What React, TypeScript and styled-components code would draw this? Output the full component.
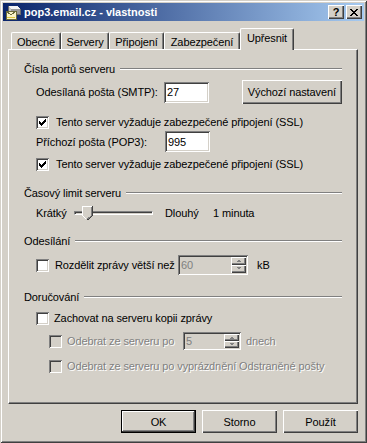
import React from "react";
import styled, { createGlobalStyle, css } from "styled-components";

const FACE = "#D4D0C8";
const SHADOW = "#808080";
const DARK = "#404040";
const HI = "#FFFFFF";

const Global = createGlobalStyle`
  html, body { margin: 0; padding: 0; background: ${FACE}; }
  body { font-family: "Liberation Sans", Arial, sans-serif; font-size: 11px; color: #000; letter-spacing: -0.1px; }
  * { box-sizing: border-box; }
`;

const Window = styled.div`
  width: 367px;
  height: 443px;
  padding: 3px;
  background: ${FACE};
  display: flex;
  flex-direction: column;
  box-shadow: inset 1px 1px ${FACE}, inset -1px -1px ${DARK}, inset 2px 2px ${HI},
    inset -2px -2px ${SHADOW};
`;

const TitleBar = styled.div`
  height: 18px;
  display: flex;
  align-items: center;
  padding: 0 2px 0 2px;
  background: linear-gradient(to right, #0a246a, #a6caf0);
  color: #fff;
`;

const TitleText = styled.div`
  flex: 1;
  margin-left: 3px;
  font-weight: bold;
  font-size: 11px;
  letter-spacing: 0;
  white-space: nowrap;
`;

const CaptionButtons = styled.div`
  display: flex;
  gap: 2px;
`;

const CaptionButton = styled.div`
  width: 16px;
  height: 14px;
  background: ${FACE};
  display: flex;
  align-items: center;
  justify-content: center;
  color: #000;
  font-weight: bold;
  font-size: 11px;
  line-height: 14px;
  box-shadow: inset 1px 1px ${HI}, inset -1px -1px ${DARK}, inset -2px -2px ${SHADOW};
`;

const Body = styled.div`
  flex: 1;
  display: flex;
  flex-direction: column;
  padding: 0 6px 7px 5px;
`;

const TabStrip = styled.div`
  margin-top: 7px;
  height: 21px;
  display: flex;
  align-items: flex-end;
  padding-left: 3px;
`;

const Tab = styled.div<{ $w: number; $active?: boolean }>`
  width: ${(p) => p.$w}px;
  height: 17px;
  display: flex;
  align-items: center;
  justify-content: center;
  background: ${FACE};
  border-top: 1px solid ${HI};
  border-left: 1px solid ${HI};
  border-right: 1px solid ${DARK};
  border-radius: 2px 2px 0 0;
  box-shadow: inset -1px 0 ${SHADOW};
  padding-top: 1px;
  white-space: nowrap;
  ${(p) =>
    p.$active &&
    css`
      height: 22px;
      margin-bottom: -1px;
      padding-bottom: 4px;
      position: relative;
      z-index: 1;
    `}
`;

const Panel = styled.div`
  height: 355px;
  display: flex;
  flex-direction: column;
  padding: 12px 15px 0 15px;
  border-top: 1px solid ${HI};
  border-left: 1px solid ${HI};
  border-right: 1px solid ${DARK};
  border-bottom: 1px solid ${DARK};
  box-shadow: inset -1px -1px ${SHADOW};
`;

const SectionHeader = styled.div<{ $mt: number }>`
  display: flex;
  align-items: center;
  height: 14px;
  margin-top: ${(p) => p.$mt}px;
  white-space: nowrap;
`;

const Rule = styled.div`
  flex: 1;
  margin-left: 5px;
  height: 2px;
  border-top: 1px solid ${SHADOW};
  border-bottom: 1px solid ${HI};
`;

const Row = styled.div<{ $mt: number; $h: number; $indent: number }>`
  display: flex;
  align-items: center;
  height: ${(p) => p.$h}px;
  margin-top: ${(p) => p.$mt}px;
  padding-left: ${(p) => p.$indent}px;
  white-space: nowrap;
`;

const Text = styled.span<{ $w?: number; $ml?: number; $disabled?: boolean }>`
  display: inline-block;
  ${(p) => (p.$w ? `width: ${p.$w}px;` : "")}
  margin-left: ${(p) => p.$ml ?? 0}px;
  ${(p) =>
    p.$disabled &&
    css`
      color: ${SHADOW};
      text-shadow: 1px 1px ${HI};
    `}
`;

const TextBox = styled.div<{ $w: number; $h: number; $disabled?: boolean }>`
  position: relative;
  width: ${(p) => p.$w}px;
  height: ${(p) => p.$h}px;
  padding: 0 3px;
  display: flex;
  align-items: center;
  background: ${(p) => (p.$disabled ? FACE : "#fff")};
  color: ${(p) => (p.$disabled ? SHADOW : "#000")};
  box-shadow: inset 1px 1px ${SHADOW}, inset -1px -1px ${HI}, inset 2px 2px ${DARK},
    inset -2px -2px ${FACE};
`;

const Spinner = styled.div`
  position: absolute;
  right: 2px;
  top: 2px;
  bottom: 2px;
  width: 15px;
  display: flex;
  flex-direction: column;
`;

const SpinButton = styled.div`
  flex: 1;
  display: flex;
  align-items: center;
  justify-content: center;
  background: ${FACE};
  box-shadow: inset 1px 1px ${HI}, inset -1px -1px ${DARK}, inset -2px -2px ${SHADOW};
`;

const CheckBox = styled.span<{ $disabled?: boolean }>`
  width: 13px;
  height: 13px;
  flex: none;
  display: inline-flex;
  align-items: center;
  justify-content: center;
  background: ${(p) => (p.$disabled ? FACE : "#fff")};
  box-shadow: inset 1px 1px ${SHADOW}, inset -1px -1px ${HI}, inset 2px 2px ${DARK},
    inset -2px -2px ${FACE};
`;

const PushButton = styled.div<{ $w: number; $h: number; $default?: boolean; $ml?: number }>`
  width: ${(p) => p.$w}px;
  height: ${(p) => p.$h}px;
  margin-left: ${(p) => p.$ml ?? 0}px;
  display: flex;
  align-items: center;
  justify-content: center;
  background: ${FACE};
  white-space: nowrap;
  box-shadow: ${(p) =>
    p.$default
      ? `inset 0 0 0 1px #000, inset -2px -2px ${DARK}, inset 2px 2px ${HI}, inset -3px -3px ${SHADOW}`
      : `inset 1px 1px ${HI}, inset -1px -1px ${DARK}, inset -2px -2px ${SHADOW}`};
`;

const ButtonRow = styled.div`
  margin-top: 6px;
  display: flex;
  justify-content: flex-end;
  gap: 6px;
`;

const SliderBox = styled.div`
  position: relative;
  width: 79px;
  height: 20px;
  display: flex;
  align-items: center;
`;

const Groove = styled.div`
  width: 100%;
  height: 4px;
  border-top: 1px solid ${SHADOW};
  border-left: 1px solid ${SHADOW};
  border-bottom: 1px solid ${HI};
  border-right: 1px solid ${HI};
  box-shadow: inset 1px 1px ${DARK};
`;

const Thumb = styled.svg`
  position: absolute;
  left: 8px;
  top: 3px;
`;

const CHECK_ROWS: [number, number][][] = [
  [[6, 1]],
  [[5, 2]],
  [[0, 1], [4, 3]],
  [[0, 2], [3, 3]],
  [[0, 5]],
  [[1, 3]],
  [[2, 1]],
];

function Check({ checked, disabled }: { checked?: boolean; disabled?: boolean }) {
  return (
    <CheckBox $disabled={disabled}>
      {checked && (
        <svg width="7" height="7" viewBox="0 0 7 7" shapeRendering="crispEdges">
          {CHECK_ROWS.map((segs, y) =>
            segs.map(([x, w], i) => <rect key={`${y}-${i}`} x={x} y={y} width={w} height={1} fill="#000" />)
          )}
        </svg>
      )}
    </CheckBox>
  );
}

function Arrow({ up }: { up?: boolean }) {
  const pts = up ? "0,3 5,3 2.5,0.5" : "0,0 5,0 2.5,2.5";
  return (
    <svg width="6" height="4" viewBox="0 0 6 4" shapeRendering="crispEdges">
      <polygon points={pts} fill={SHADOW} transform="translate(0.5,0)" />
    </svg>
  );
}

function SpinBox({ value, w, h }: { value: string; w: number; h: number }) {
  return (
    <TextBox $w={w} $h={h} $disabled>
      {value}
      <Spinner>
        <SpinButton>
          <Arrow up />
        </SpinButton>
        <SpinButton>
          <Arrow />
        </SpinButton>
      </Spinner>
    </TextBox>
  );
}

function TitleIcon() {
  return (
    <svg width="16" height="16" viewBox="0 0 16 16" shapeRendering="crispEdges">
      <polygon points="3,2 12,2 15,5 15,10 6,10 3,7" fill="#c8c8c8" stroke="#6a6a6a" strokeWidth="1" />
      <polygon points="3,2 12,2 15,5 6,5" fill="#f4f4f4" />
      <rect x="6" y="5" width="9" height="5" fill="#9a9a9a" />
      <rect x="1" y="7" width="10" height="8" fill="#f8f3c8" stroke="#6b6b3a" />
      <polyline points="1,7 6,11 11,7" fill="none" stroke="#6b6b3a" />
      <rect x="2" y="13" width="8" height="1" fill="#e0c840" />
    </svg>
  );
}

function CloseGlyph() {
  return (
    <svg width="8" height="7" viewBox="0 0 8 7" shapeRendering="crispEdges">
      {[0, 1, 2, 3, 4, 5, 6].map((i) => (
        <React.Fragment key={i}>
          <rect x={i} y={i} width={2} height={1} fill="#000" />
          <rect x={6 - i} y={i} width={2} height={1} fill="#000" />
        </React.Fragment>
      ))}
    </svg>
  );
}

function ThumbShape() {
  return (
    <Thumb width="11" height="14" viewBox="0 0 11 14" shapeRendering="crispEdges">
      <polygon points="0,0 10,0 10,9 5,14 0,9" fill={FACE} />
      <polyline points="0.5,9.5 0.5,0.5 9.5,0.5" fill="none" stroke={HI} />
      <polyline points="10.5,0 10.5,9.5 5.5,14" fill="none" stroke={DARK} />
      <polyline points="9.5,1 9.5,9.5 5.5,13" fill="none" stroke={SHADOW} />
      <polyline points="0.5,9.5 4.5,13.5" fill="none" stroke={HI} />
    </Thumb>
  );
}

export default function App() {
  return (
    <>
      <Global />
      <Window>
        <TitleBar>
          <TitleIcon />
          <TitleText>pop3.email.cz - vlastnosti</TitleText>
          <CaptionButtons>
            <CaptionButton>?</CaptionButton>
            <CaptionButton>
              <CloseGlyph />
            </CaptionButton>
          </CaptionButtons>
        </TitleBar>
        <Body>
          <TabStrip>
            <Tab $w={50}>Obecné</Tab>
            <Tab $w={48}>Servery</Tab>
            <Tab $w={55}>Připojení</Tab>
            <Tab $w={76}>Zabezpečení</Tab>
            <Tab $w={54} $active>
              Upřesnit
            </Tab>
          </TabStrip>
          <Panel>
            <SectionHeader $mt={0}>
              Čísla portů serveru
              <Rule />
            </SectionHeader>
            <Row $mt={4} $h={24} $indent={12}>
              <Text $w={129}>Odesílaná pošta (SMTP):</Text>
              <TextBox $w={45} $h={21}>
                27
              </TextBox>
              <PushButton $w={101} $h={24} $ml={33}>
                Výchozí nastavení
              </PushButton>
            </Row>
            <Row $mt={10} $h={16} $indent={12}>
              <Check checked />
              <Text $ml={7}>Tento server vyžaduje zabezpečené připojení (SSL)</Text>
            </Row>
            <Row $mt={1} $h={21} $indent={12}>
              <Text $w={129}>Příchozí pošta (POP3):</Text>
              <TextBox $w={45} $h={21}>
                995
              </TextBox>
            </Row>
            <Row $mt={4} $h={16} $indent={12}>
              <Check checked />
              <Text $ml={7}>Tento server vyžaduje zabezpečené připojení (SSL)</Text>
            </Row>

            <SectionHeader $mt={14}>
              Časový limit serveru
              <Rule />
            </SectionHeader>
            <Row $mt={3} $h={20} $indent={12}>
              <Text $w={38}>Krátký</Text>
              <SliderBox>
                <Groove />
                <ThumbShape />
              </SliderBox>
              <Text $w={48} $ml={12}>
                Dlouhý
              </Text>
              <Text>1 minuta</Text>
            </Row>

            <SectionHeader $mt={11}>
              Odesílání
              <Rule />
            </SectionHeader>
            <Row $mt={7} $h={20} $indent={12}>
              <Check />
              <Text $w={123} $ml={6}>
                Rozdělit zprávy větší než
              </Text>
              <SpinBox value="60" w={70} h={20} />
              <Text $ml={9}>kB</Text>
            </Row>

            <SectionHeader $mt={15}>
              Doručování
              <Rule />
            </SectionHeader>
            <Row $mt={6} $h={16} $indent={12}>
              <Check />
              <Text $ml={5}>Zachovat na serveru kopii zprávy</Text>
            </Row>
            <Row $mt={6} $h={18} $indent={25}>
              <Check disabled />
              <Text $w={116} $ml={5} $disabled>
                Odebrat ze serveru po
              </Text>
              <SpinBox value="5" w={58} h={18} />
              <Text $ml={5} $disabled>
                dnech
              </Text>
            </Row>
            <Row $mt={8} $h={16} $indent={25}>
              <Check disabled />
              <Text $ml={5} $disabled>
                Odebrat ze serveru po vyprázdnění Odstraněné pošty
              </Text>
            </Row>
          </Panel>
          <ButtonRow>
            <PushButton $w={75} $h={23} $default>
              OK
            </PushButton>
            <PushButton $w={75} $h={23}>
              Storno
            </PushButton>
            <PushButton $w={75} $h={23}>
              Použít
            </PushButton>
          </ButtonRow>
        </Body>
      </Window>
    </>
  );
}
